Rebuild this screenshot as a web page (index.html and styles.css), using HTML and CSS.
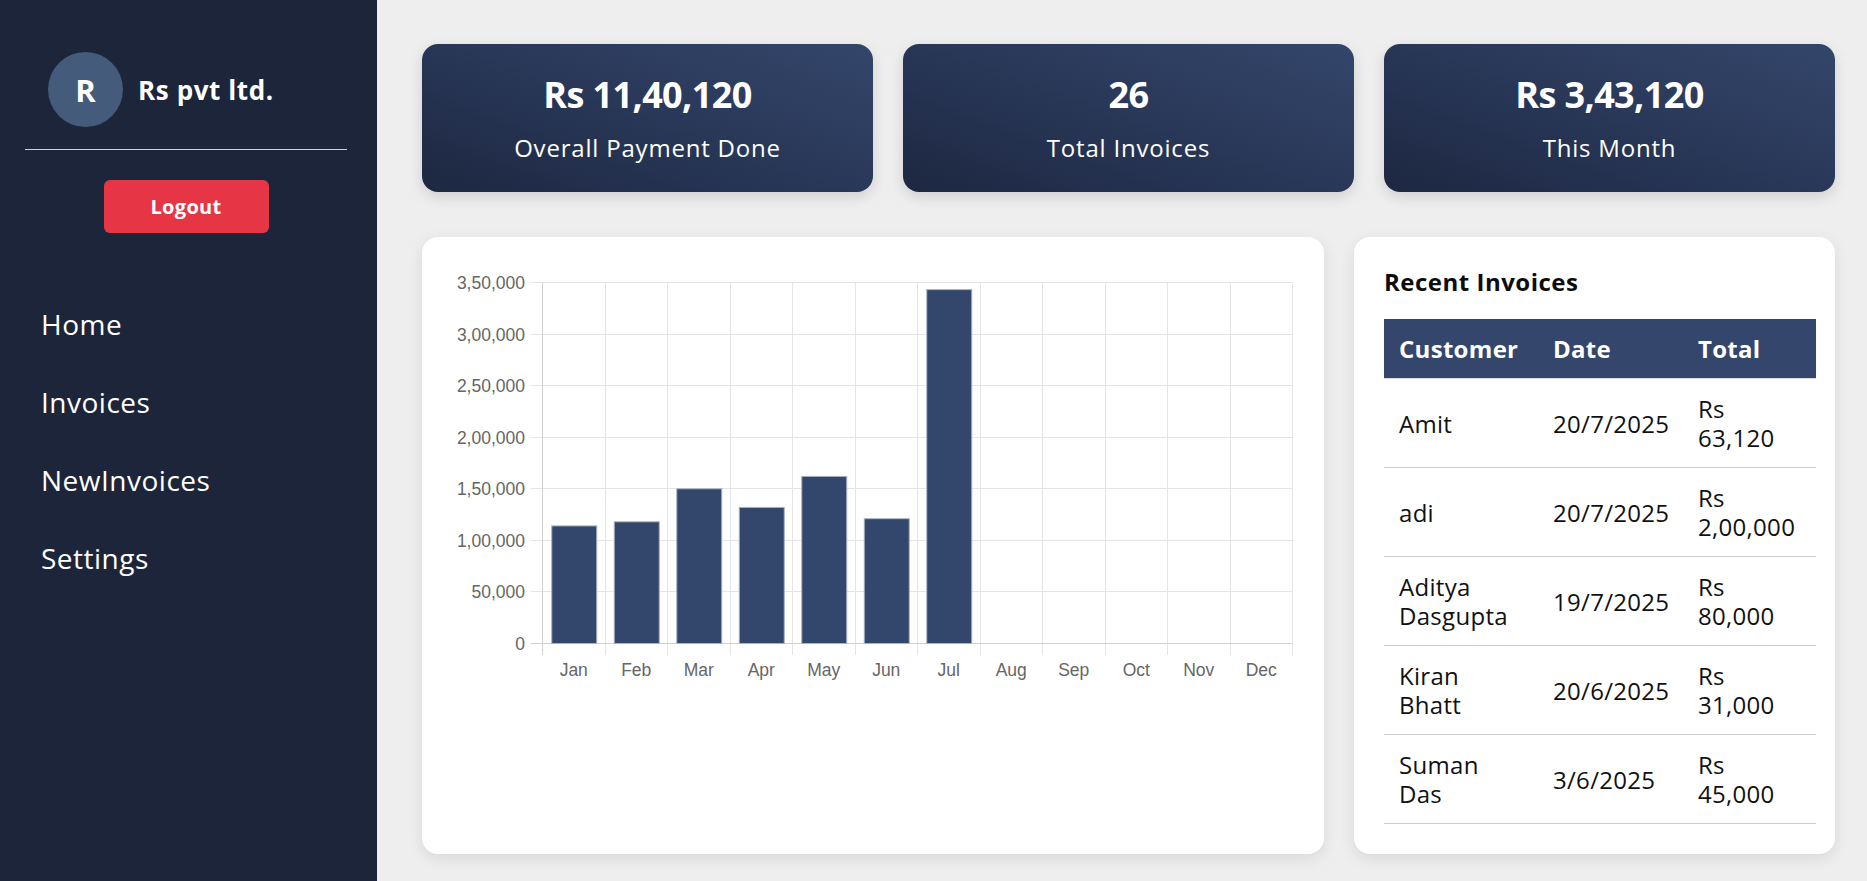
FILE: index.html
```html
<!DOCTYPE html>
<html lang="en">
<head>
<meta charset="utf-8">
<title>Dashboard</title>
<link rel="stylesheet" href="styles.css">
</head>
<body>
<aside class="sidebar">
  <div class="brand">
    <div class="avatar">R</div>
    <div class="brand-name">Rs pvt ltd.</div>
  </div>
  <button class="logout">Logout</button>
  <nav class="nav">
    <a class="nav-item">Home</a>
    <a class="nav-item">Invoices</a>
    <a class="nav-item">NewInvoices</a>
    <a class="nav-item">Settings</a>
  </nav>
</aside>
<main class="main">
  <section class="stats">
    <div class="stat-card">
      <div class="stat-value">Rs 11,40,120</div>
      <div class="stat-label">Overall Payment Done</div>
    </div>
    <div class="stat-card">
      <div class="stat-value">26</div>
      <div class="stat-label">Total Invoices</div>
    </div>
    <div class="stat-card">
      <div class="stat-value">Rs 3,43,120</div>
      <div class="stat-label">This Month</div>
    </div>
  </section>
  <section class="bottom">
    <div class="card chart-card">
      <svg class="chart" width="842" height="430" viewBox="0 0 842 430">
        <g class="grid" stroke="#e5e5e5" stroke-width="1">
          <line x1="78.5" y1="15.5" x2="840.5" y2="15.5"/>
          <line x1="78.5" y1="67.5" x2="840.5" y2="67.5"/>
          <line x1="78.5" y1="118.5" x2="840.5" y2="118.5"/>
          <line x1="78.5" y1="170.5" x2="840.5" y2="170.5"/>
          <line x1="78.5" y1="221.5" x2="840.5" y2="221.5"/>
          <line x1="78.5" y1="273.5" x2="840.5" y2="273.5"/>
          <line x1="78.5" y1="324.5" x2="840.5" y2="324.5"/>
          <line x1="153.5" y1="15.5" x2="153.5" y2="388"/>
          <line x1="215.5" y1="15.5" x2="215.5" y2="388"/>
          <line x1="278.5" y1="15.5" x2="278.5" y2="388"/>
          <line x1="340.5" y1="15.5" x2="340.5" y2="388"/>
          <line x1="403.5" y1="15.5" x2="403.5" y2="388"/>
          <line x1="465.5" y1="15.5" x2="465.5" y2="388"/>
          <line x1="528.5" y1="15.5" x2="528.5" y2="388"/>
          <line x1="590.5" y1="15.5" x2="590.5" y2="388"/>
          <line x1="653.5" y1="15.5" x2="653.5" y2="388"/>
          <line x1="715.5" y1="15.5" x2="715.5" y2="388"/>
          <line x1="778.5" y1="15.5" x2="778.5" y2="388"/>
          <line x1="840.5" y1="15.5" x2="840.5" y2="388"/>
        </g>
        <g stroke="#d0d0d0" stroke-width="1">
          <line x1="90.5" y1="15.5" x2="90.5" y2="388"/>
          <line x1="78.5" y1="376.5" x2="840.5" y2="376.5"/>
        </g>
        <g class="bars" fill="#33466b" stroke="#a9b3c4" stroke-width="1">
          <rect x="99.75" y="258.9" width="45" height="117.6"/>
          <rect x="162.25" y="254.8" width="45" height="121.7"/>
          <rect x="224.75" y="221.8" width="45" height="154.7"/>
          <rect x="287.25" y="240.4" width="45" height="136.1"/>
          <rect x="349.75" y="209.4" width="45" height="167.1"/>
          <rect x="412.25" y="251.7" width="45" height="124.8"/>
          <rect x="474.75" y="22.6" width="45" height="353.9"/>
        </g>
        <g class="y-labels" font-family="Liberation Sans, Arial, sans-serif" font-size="17.5" fill="#666" text-anchor="end">
          <text x="73" y="21.5">3,50,000</text>
          <text x="73" y="73.5">3,00,000</text>
          <text x="73" y="124.5">2,50,000</text>
          <text x="73" y="176.5">2,00,000</text>
          <text x="73" y="227.5">1,50,000</text>
          <text x="73" y="279.5">1,00,000</text>
          <text x="73" y="330.5">50,000</text>
          <text x="73" y="382.5">0</text>
        </g>
        <g class="x-labels" font-family="Liberation Sans, Arial, sans-serif" font-size="17.5" fill="#666" text-anchor="middle">
          <text x="121.75" y="408.5">Jan</text>
          <text x="184.25" y="408.5">Feb</text>
          <text x="246.75" y="408.5">Mar</text>
          <text x="309.25" y="408.5">Apr</text>
          <text x="371.75" y="408.5">May</text>
          <text x="434.25" y="408.5">Jun</text>
          <text x="496.75" y="408.5">Jul</text>
          <text x="559.25" y="408.5">Aug</text>
          <text x="621.75" y="408.5">Sep</text>
          <text x="684.25" y="408.5">Oct</text>
          <text x="746.75" y="408.5">Nov</text>
          <text x="809.25" y="408.5">Dec</text>
        </g>
      </svg>
    </div>
    <div class="card table-card">
      <h3 class="table-title">Recent Invoices</h3>
      <table class="invoices">
        <colgroup>
          <col class="col-customer">
          <col class="col-date">
          <col class="col-total">
        </colgroup>
        <thead>
          <tr><th>Customer</th><th>Date</th><th>Total</th></tr>
        </thead>
        <tbody>
          <tr><td>Amit</td><td>20/7/2025</td><td>Rs 63,120</td></tr>
          <tr><td>adi</td><td>20/7/2025</td><td>Rs 2,00,000</td></tr>
          <tr><td>Aditya Dasgupta</td><td>19/7/2025</td><td>Rs 80,000</td></tr>
          <tr><td>Kiran Bhatt</td><td>20/6/2025</td><td>Rs 31,000</td></tr>
          <tr><td>Suman Das</td><td>3/6/2025</td><td>Rs 45,000</td></tr>
        </tbody>
      </table>
    </div>
  </section>
</main>
</body>
</html>
```

FILE: styles.css
```css
* { box-sizing: border-box; }

html, body {
  margin: 0;
  height: 100%;
}

body {
  display: flex;
  height: 881px;
  overflow: hidden;
  font-family: "Open Sans", "DejaVu Sans", sans-serif;
  background: #eeeeee;
  color: #111;
}

.sidebar {
  width: 377px;
  flex: 0 0 377px;
  background: #1c2539;
  color: #fff;
  padding: 52px 30px 0 25px;
  display: flex;
  flex-direction: column;
}

.brand {
  display: flex;
  align-items: center;
  gap: 15px;
  padding: 0 0 22px 23px;
  border-bottom: 1px solid #cfd2d8;
}

.avatar {
  width: 75px;
  height: 75px;
  border-radius: 50%;
  background: #445b7b;
  display: flex;
  align-items: center;
  justify-content: center;
  font-weight: 700;
  font-size: 31px;
  color: #fff;
}

.brand-name {
  font-weight: 700;
  font-size: 26px;
  letter-spacing: 0.6px;
}

.logout {
  align-self: center;
  margin-top: 30px;
  width: 165px;
  height: 53px;
  border: none;
  border-radius: 6px;
  background: #e63646;
  color: #fff;
  font-family: "Open Sans", "DejaVu Sans", sans-serif;
  font-weight: 700;
  font-size: 20px;
  letter-spacing: 0.3px;
}

.nav {
  margin-top: 52px;
  padding-left: 16px;
  display: flex;
  flex-direction: column;
}

.nav-item {
  display: block;
  height: 78px;
  line-height: 78px;
  font-size: 28px;
  letter-spacing: 0.5px;
  color: #fff;
}

.main {
  flex: 1;
  display: flex;
  flex-direction: column;
  gap: 45px;
  padding: 44px 32px 27px 45px;
  min-width: 0;
}

.stats {
  display: grid;
  grid-template-columns: repeat(3, 1fr);
  gap: 30px;
}

.stat-card {
  height: 148px;
  border-radius: 16px;
  background: linear-gradient(20deg, #1d2740 0%, #2a395a 55%, #33466a 100%);
  color: #fff;
  text-align: center;
  padding-top: 29px;
  box-shadow: 0 5px 14px rgba(0, 0, 0, 0.13);
}

.stat-value {
  font-weight: 700;
  font-size: 36px;
  line-height: 44px;
  letter-spacing: -0.6px;
}

.stat-label {
  margin-top: 16px;
  font-size: 24px;
  line-height: 30px;
  letter-spacing: 0.8px;
}

.bottom {
  flex: 1;
  display: grid;
  grid-template-columns: minmax(0, 1fr) 481px;
  gap: 30px;
  min-height: 0;
}

.card {
  background: #fff;
  border-radius: 16px;
  box-shadow: 0 5px 16px rgba(0, 0, 0, 0.09);
}

.chart-card {
  padding: 30px;
}

.chart {
  display: block;
}

.table-card {
  padding: 30px 19px 30px 30px;
}

.table-title {
  margin: 0 0 23px;
  font-size: 24px;
  line-height: 29px;
  font-weight: 700;
  letter-spacing: 0.5px;
  color: #0d0d0d;
}

.invoices {
  width: 432px;
  table-layout: fixed;
  border-collapse: collapse;
  font-size: 24px;
  line-height: 29px;
  letter-spacing: 0.3px;
}

.col-customer { width: 154px; }
.col-date { width: 145px; }
.col-total { width: 133px; }

.invoices th {
  background: #34466b;
  color: #fff;
  text-align: left;
  font-weight: 700;
  padding: 15px;
  border-bottom: 1px solid #d9d9d9;
}

.invoices td {
  padding: 15px;
  border-bottom: 1px solid #cccccc;
  vertical-align: middle;
  color: #111;
}

.invoices td:nth-child(2) {
  padding-right: 5px;
}
```
